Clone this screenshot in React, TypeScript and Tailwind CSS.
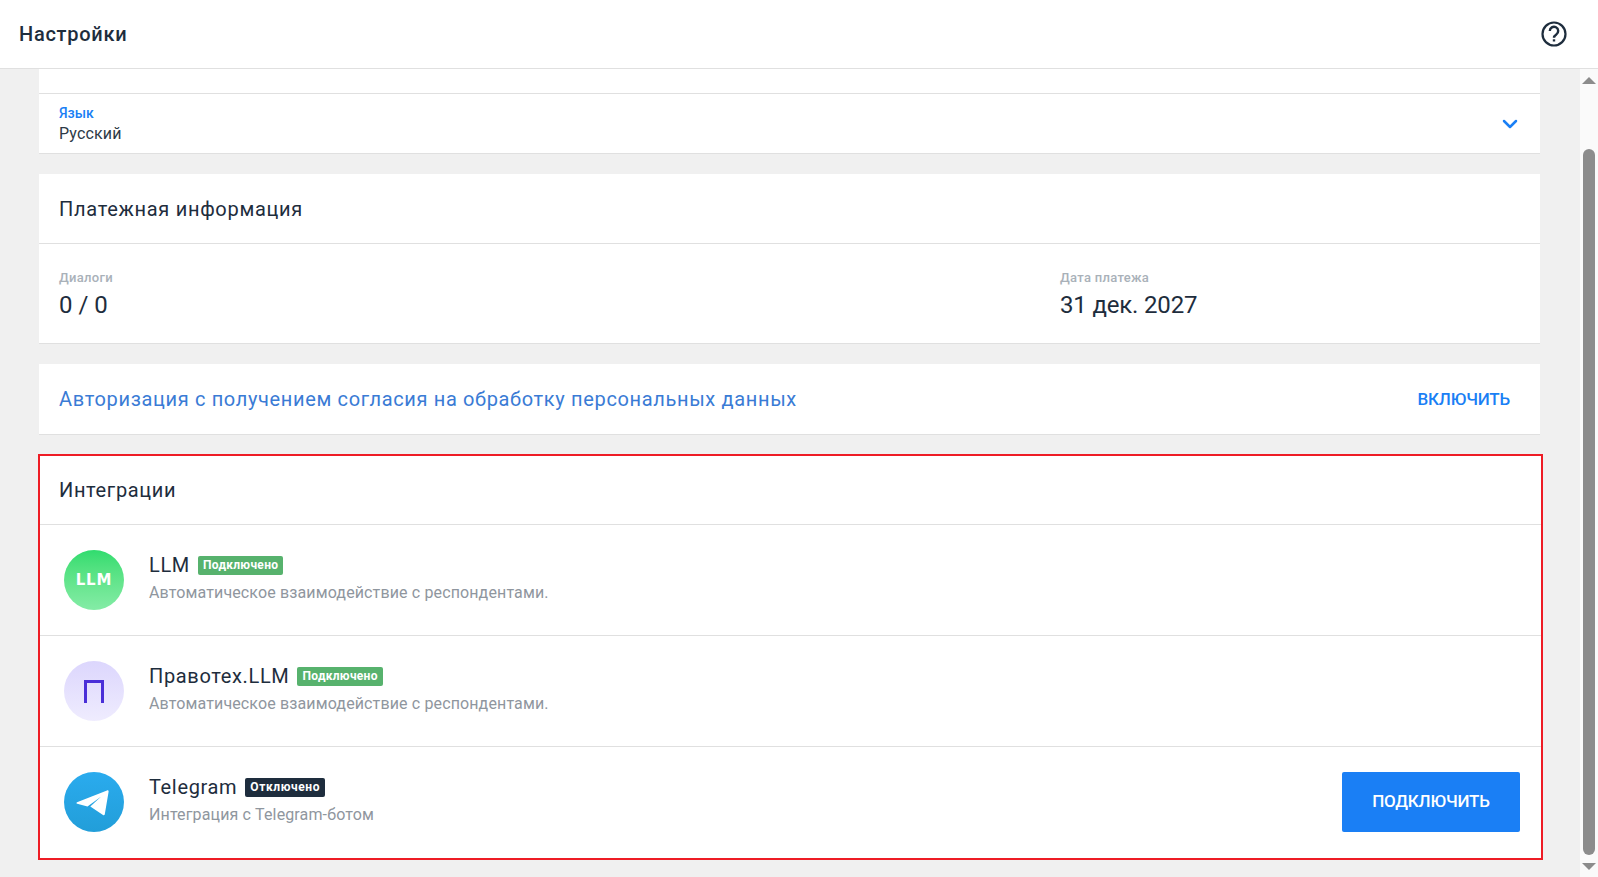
import React from 'react';
import { ChevronDown } from 'lucide-react';

function StatusTag({ label, tone }: { label: string; tone: 'on' | 'off' }) {
  return (
    <span
      className={`ml-2 inline-flex h-[19px] items-center rounded-[2px] px-[5px] text-[12px] font-bold text-white ${
        tone === 'on' ? 'bg-[#57b26d] tracking-[0.3px]' : 'bg-[#1e2d3d] tracking-[0.6px]'
      }`}
    >
      {label}
    </span>
  );
}

function LlmIcon() {
  return (
    <div className="flex h-[60px] w-[60px] shrink-0 items-center justify-center rounded-full bg-gradient-to-b from-[#2fdc6e] to-[#84eca6]">
      <span className="mt-[1px] font-['DejaVu_Sans',sans-serif] text-[15px] font-bold leading-none tracking-[0.8px] text-white">
        LLM
      </span>
    </div>
  );
}

function PravotexIcon() {
  return (
    <div className="flex h-[60px] w-[60px] shrink-0 items-center justify-center rounded-full bg-gradient-to-b from-[#dcd6fd] to-[#efecfe]">
      <svg width="20" height="23" viewBox="0 0 20 23" fill="none">
        <path d="M1.5 23V1.5H18.5V23" stroke="#4a2fd8" strokeWidth="3" />
      </svg>
    </div>
  );
}

function TelegramIcon() {
  return (
    <div className="flex h-[60px] w-[60px] shrink-0 items-center justify-center rounded-full bg-gradient-to-b from-[#2aabee] to-[#229ed9]">
      <svg width="33" height="26" viewBox="0 0 33 26" className="mr-[4px] mt-[2px]">
        <path
          d="M1 12.200 31 .4c1-.4 1.800.2 1.600 1.300L28.800 24.300c-.2 1.100-1 1.300-1.800.8L14.300 16.400 25.200 6.600 11.500 16.500 1.200 13.800c-.9-.3-1-1.200-.2-1.600Z"
          fill="#fff"
        />
      </svg>
    </div>
  );
}

function IntegrationRow({
  icon,
  name,
  status,
  tone,
  description,
  action,
  last = false,
}: {
  icon: React.ReactNode;
  name: string;
  status: string;
  tone: 'on' | 'off';
  description: string;
  action?: React.ReactNode;
  last?: boolean;
}) {
  return (
    <div className={`flex h-[111px] items-center border-b pl-[24px] pr-[21px] ${last ? 'border-transparent' : 'border-[#e0e0e0]'}`}>
      {icon}
      <div className="ml-[25px] min-w-0 pb-[4px]">
        <div className="flex items-center">
          <span className="text-[20px] leading-[28px] tracking-[0.65px] text-[#1e2d3d]">{name}</span>
          <StatusTag label={status} tone={tone} />
        </div>
        <p className="mt-[2px] text-[16px] leading-[24px] tracking-[0.13px] text-[#8f969e]">{description}</p>
      </div>
      {action && <div className="ml-auto">{action}</div>}
    </div>
  );
}

function Scrollbar() {
  return (
    <div className="flex w-[18px] shrink-0 flex-col items-center bg-[#fafafa]">
      <div className="mt-[8px] h-0 w-0 border-x-[7px] border-b-[7px] border-x-transparent border-b-[#8c8c8c]" />
      <div className="mt-[65px] w-[12px] flex-1 rounded-full bg-[#8c8c8c]" />
      <div className="mb-[7px] mt-[8px] h-0 w-0 border-x-[7px] border-t-[7px] border-x-transparent border-t-[#8c8c8c]" />
    </div>
  );
}

export default function App() {
  return (
    <div className="flex h-screen flex-col overflow-hidden bg-[#f0f0f0] font-['Roboto',sans-serif] text-[#1e2d3d]">
      <header className="flex h-[69px] shrink-0 items-center justify-between border-b border-[#e0e0e0] bg-white pl-[19px] pr-[31px]">
        <h1 className="text-[20px] font-medium tracking-[0.72px]">Настройки</h1>
        <svg width="26" height="26" viewBox="0 0 26 26" fill="none" stroke="#1e2d3d">
          <circle cx="13" cy="13" r="11.500" strokeWidth="2.200" />
          <path d="M8.800 10a4.200 4.200 0 1 1 6.500 3.500c-1.500 1-2.300 1.700-2.300 3.300" strokeWidth="2.400" />
          <path d="M13 18.300v2.200" strokeWidth="2.400" />
        </svg>
      </header>

      <div className="flex min-h-0 flex-1">
        <main className="min-w-0 flex-1 overflow-hidden pl-[39px] pr-[40px]">
          <div className="h-[25px] border-b border-[#e0e0e0] bg-white" />
          <div className="flex h-[60px] items-center justify-between border-b border-[#e0e0e0] bg-white pl-[20px] pr-[18px]">
            <div className="pt-[2px]">
              <p className="text-[14px] font-medium leading-[16px] text-[#1a7ff5]">Язык</p>
              <p className="mt-[2px] text-[16px] leading-[22px] tracking-[0.15px] text-[#2d3a47]">Русский</p>
            </div>
            <ChevronDown size={24} strokeWidth={2.500} className="text-[#1a7ff5]" />
          </div>

          <section className="mt-[20px] border-b border-[#e0e0e0] bg-white">
            <h2 className="flex h-[70px] items-center border-b border-[#e0e0e0] px-[20px] text-[20px] font-normal tracking-[0.7px]">
              Платежная информация
            </h2>
            <div className="grid h-[99px] grid-cols-[1001px_1fr] items-center px-[20px] pt-[2px]">
              <div>
                <p className="text-[13px] font-medium leading-[18px] tracking-[0.3px] text-[#a9b1b9]">Диалоги</p>
                <p className="mt-[2px] text-[24px] leading-[32px]">0 / 0</p>
              </div>
              <div>
                <p className="text-[13px] font-medium leading-[18px] tracking-[0.3px] text-[#a9b1b9]">Дата платежа</p>
                <p className="mt-[2px] text-[24px] leading-[32px] tracking-[-0.17px]">31 дек. 2027</p>
              </div>
            </div>
          </section>

          <section className="mt-[20px] flex h-[71px] items-center justify-between border-b border-[#e0e0e0] bg-white pl-[20px] pr-[30px]">
            <span className="text-[20px] tracking-[0.65px] text-[#3a7bd5]">
              Авторизация с получением согласия на обработку персональных данных
            </span>
            <span className="pt-[1px] text-[17px] font-medium tracking-[-0.2px] text-[#1a7ff5]">ВКЛЮЧИТЬ</span>
          </section>

          <section className="mt-[19px] -ml-px -mr-[3px] border-2 border-[#ee1c25] bg-white">
            <h2 className="flex h-[69px] items-center border-b border-[#e0e0e0] px-[19px] text-[20px] font-normal tracking-[0.65px]">
              Интеграции
            </h2>
            <IntegrationRow
              icon={<LlmIcon />}
              name="LLM"
              status="Подключено"
              tone="on"
              description="Автоматическое взаимодействие с респондентами."
            />
            <IntegrationRow
              icon={<PravotexIcon />}
              name="Правотех.LLM"
              status="Подключено"
              tone="on"
              description="Автоматическое взаимодействие с респондентами."
            />
            <IntegrationRow
              icon={<TelegramIcon />}
              name="Telegram"
              status="Отключено"
              tone="off"
              description="Интеграция с Telegram-ботом"
              last
              action={
                <button
                  type="button"
                  className="h-[60px] w-[178px] rounded-[2px] bg-[#1a7ff5] text-[17px] font-medium tracking-[-0.2px] text-white"
                >
                  ПОДКЛЮЧИТЬ
                </button>
              }
            />
          </section>
        </main>
        <Scrollbar />
      </div>
    </div>
  );
}
